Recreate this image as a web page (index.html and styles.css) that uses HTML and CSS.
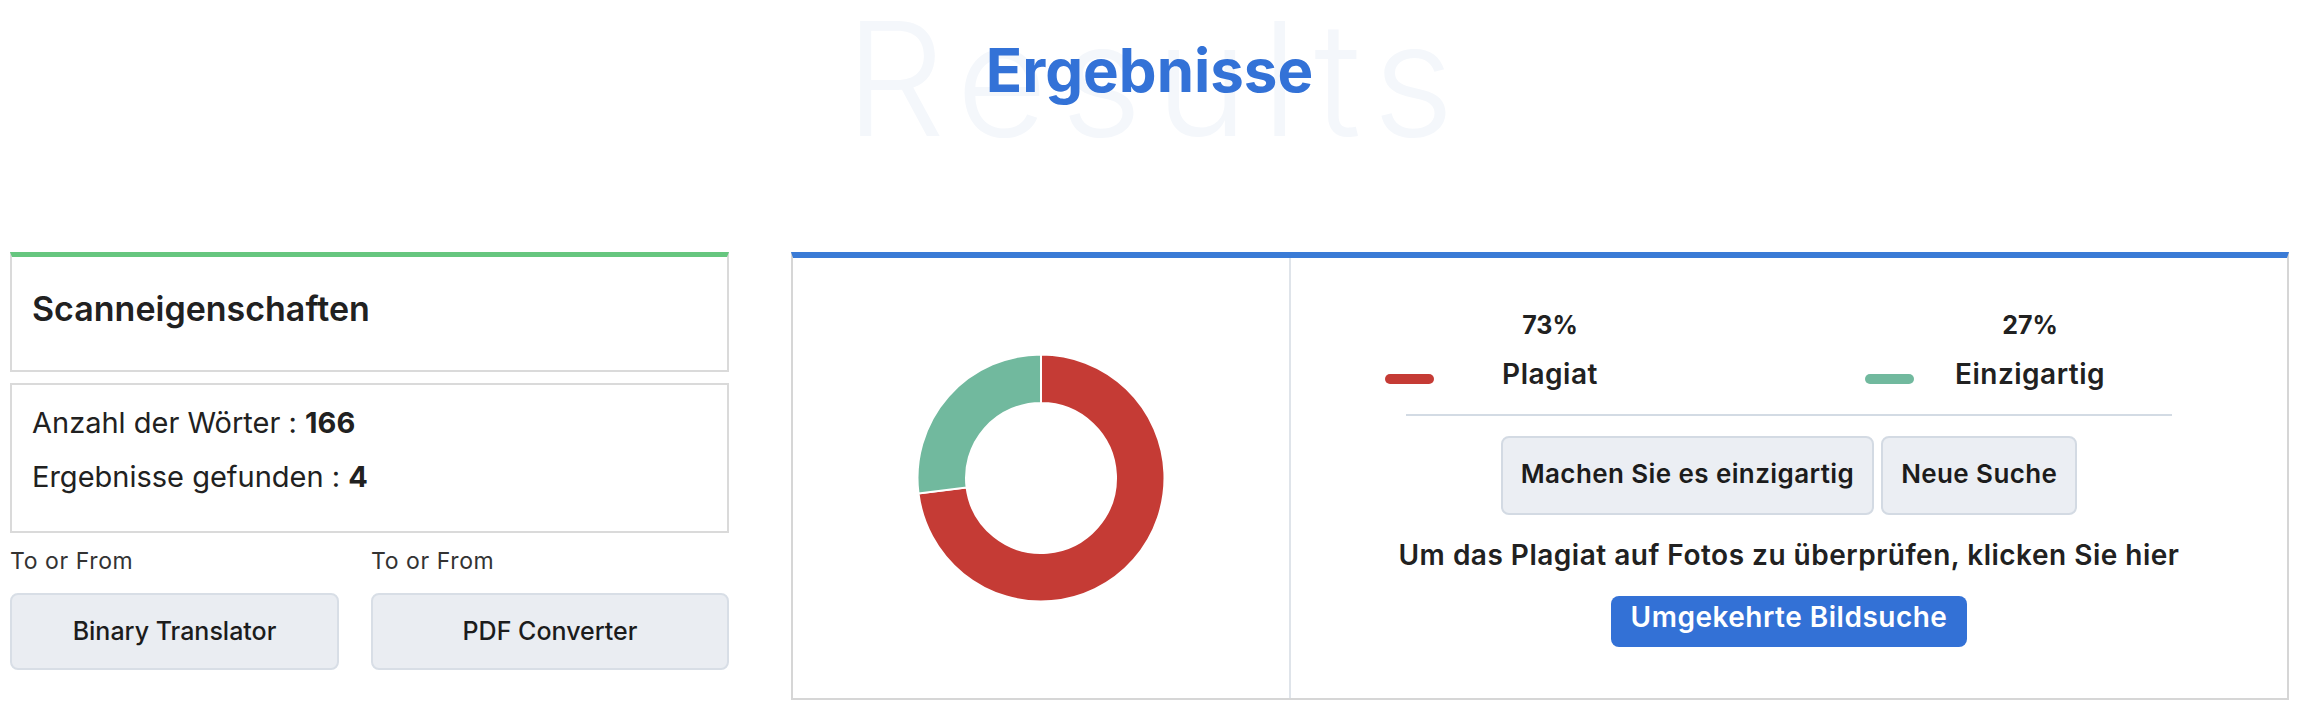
FILE: index.html
```html
<!DOCTYPE html>
<html lang="de">
<head>
    <meta charset="UTF-8">
    <meta name="viewport" content="width=device-width, initial-scale=1.0">
    <title>Ergebnisse</title>
    <link rel="stylesheet" href="styles.css">
</head>
<body>
    <div class="page">
        <div class="results-header">
            <span class="watermark">Results</span>
            <h1>Ergebnisse</h1>
        </div>

        <div class="results-row">
            <!-- left side -->
            <div class="side">
                <div class="box box-green">
                    <h2>Scanneigenschaften</h2>
                </div>
                <div class="box stats">
                    <p>Anzahl der Wörter : <strong>166</strong></p>
                    <p>Ergebnisse gefunden : <strong>4</strong></p>
                </div>
                <div class="tools">
                    <div class="tool">
                        <span class="tool-label">To or From</span>
                        <a href="#" class="tool-btn">Binary Translator</a>
                    </div>
                    <div class="tool">
                        <span class="tool-label">To or From</span>
                        <a href="#" class="tool-btn">PDF Converter</a>
                    </div>
                </div>
            </div>

            <!-- report -->
            <div class="report">
                <div class="chart">
                    <svg width="248" height="248" viewBox="0 0 248 248">
                        <path d="M124 0.5 A123.5 123.5 0 1 1 1.47 139.48 L49.59 133.4 A75 75 0 1 0 124 49 Z" fill="#c53b35" stroke="#fff" stroke-width="2"/>
                        <path d="M1.47 139.48 A123.5 123.5 0 0 1 124 0.5 L124 49 A75 75 0 0 0 49.59 133.4 Z" fill="#71b99e" stroke="#fff" stroke-width="2"/>
                    </svg>
                </div>
                <div class="summary">
                    <div class="legend">
                        <div class="legend-item">
                            <span class="pct">73%</span>
                            <span class="bar bar-red"></span>
                            <span class="legend-label">Plagiat</span>
                        </div>
                        <div class="legend-item">
                            <span class="pct">27%</span>
                            <span class="bar bar-green"></span>
                            <span class="legend-label">Einzigartig</span>
                        </div>
                    </div>
                    <hr class="divider">
                    <div class="actions">
                        <button class="action-btn">Machen Sie es einzigartig</button>
                        <button class="action-btn">Neue Suche</button>
                    </div>
                    <p class="photo-note">Um das Plagiat auf Fotos zu überprüfen, klicken Sie hier</p>
                    <a href="#" class="reverse-btn">Umgekehrte Bildsuche</a>
                </div>
            </div>
        </div>
    </div>
</body>
</html>
```

FILE: styles.css
```css
body {
    margin: 0;
    font-family: Inter, "Open Sans", sans-serif;
    color: #212121;
    background-color: #fff;
}
.page {
    padding: 0 21px 0 10px;
}
.results-header {
    position: relative;
    height: 252px;
    text-align: center;
}
.watermark {
    position: absolute;
    left: 0;
    right: 0;
    top: 0;
    padding-left: 13px;
    font-size: 158px;
    font-weight: 300;
    line-height: 1;
    letter-spacing: 13px;
    color: #f4f7fb;
}
.results-header h1 {
    position: relative;
    margin: 0;
    padding-top: 40px;
    font-size: 60px;
    font-weight: 700;
    line-height: 1;
    color: #3372d7;
}
.results-row {
    display: grid;
    grid-template-columns: 719px 1fr;
    gap: 62px;
}

/* left side */
.box {
    border: 2px solid #dadada;
}
.box-green {
    border-top: 5px solid #66c67f;
    padding: 33px 20px 42px;
}
.box-green h2 {
    margin: 0;
    font-size: 34px;
    font-weight: 600;
    line-height: 38px;
}
.stats {
    margin-top: 11px;
    padding: 11px 20px 27px;
}
.stats p {
    margin: 0;
    font-size: 29px;
    line-height: 54px;
}
.stats strong {
    font-weight: 700;
}
.tools {
    display: grid;
    grid-template-columns: 329px 1fr;
    gap: 32px;
    margin-top: 12px;
}
.tool-label {
    display: block;
    font-size: 23px;
    line-height: 33px;
    letter-spacing: 0.6px;
    color: #333;
    margin-bottom: 15px;
}
.tool-btn {
    display: block;
    height: 73px;
    line-height: 73px;
    text-align: center;
    background-color: #eaedf2;
    border: 2px solid #d8dee6;
    border-radius: 8px;
    color: #1c1c1c;
    font-size: 25px;
    font-weight: 500;
    text-decoration: none;
}

/* report */
.report {
    display: flex;
    border: 2px solid #d6d6d6;
    border-top: 6px solid #3a7bd6;
}
.chart {
    flex: 0 0 496px;
    display: flex;
    align-items: center;
    justify-content: center;
    border-right: 2px solid #dfe4ea;
}
.chart svg {
    display: block;
}
.summary {
    flex: 1;
    padding: 49px 0 51px;
    text-align: center;
}
.legend {
    display: flex;
    gap: 199px;
    padding-left: 94px;
}
.legend-item {
    display: grid;
    grid-template-columns: 49px 232px;
    row-gap: 13px;
}
.pct {
    grid-column: 2;
    font-size: 25px;
    font-weight: 700;
    line-height: 36px;
}
.bar {
    grid-column: 1;
    align-self: center;
    height: 10px;
    margin-top: 9px;
    border-radius: 5px;
}
.bar-red {
    background-color: #c53b35;
}
.bar-green {
    background-color: #71b99e;
}
.legend-label {
    font-size: 28px;
    font-weight: 600;
    line-height: 36px;
    letter-spacing: 0.5px;
}
.divider {
    width: 766px;
    margin: 22px auto 0;
    border: none;
    border-top: 2px solid #d3dbe4;
}
.actions {
    display: flex;
    justify-content: center;
    gap: 7px;
    margin-top: 20px;
}
.action-btn {
    padding: 18px 18px 21px;
    background-color: #ebeef3;
    border: 2px solid #d3dae3;
    border-radius: 8px;
    font-family: inherit;
    font-size: 26px;
    font-weight: 600;
    line-height: 36px;
    letter-spacing: 0.4px;
    color: #1c1c1c;
    cursor: pointer;
}
.photo-note {
    margin: 22px 0 0;
    font-size: 28px;
    font-weight: 600;
    line-height: 36px;
    letter-spacing: 0.5px;
}
.reverse-btn {
    display: inline-block;
    margin-top: 23px;
    padding: 6px 20px 15px;
    background-color: #3371d6;
    border-radius: 8px;
    color: #fff;
    font-size: 28px;
    font-weight: 600;
    line-height: 30px;
    letter-spacing: 0.5px;
    text-decoration: none;
}
```
